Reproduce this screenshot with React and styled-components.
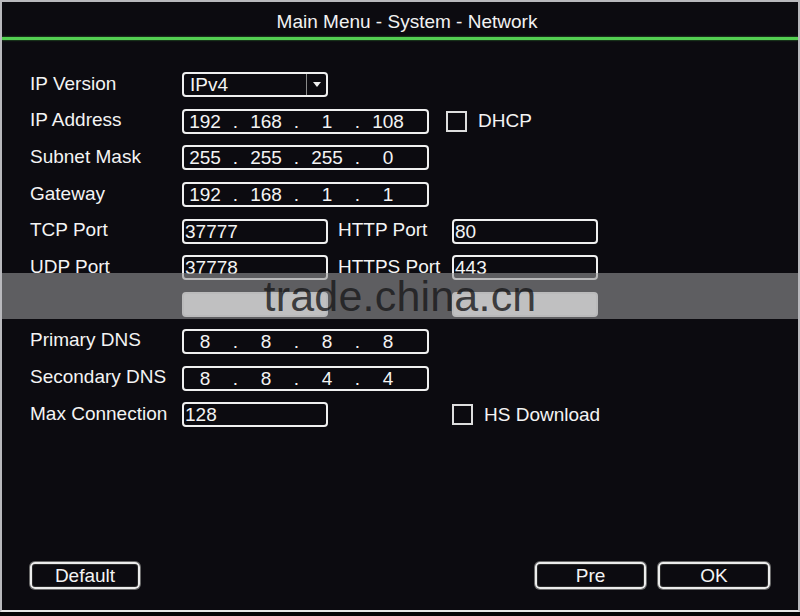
import React from 'react';
import styled, {createGlobalStyle} from 'styled-components';

const GlobalStyle = createGlobalStyle`
    html, body {
        margin: 0;
        padding: 0;
        background: #050507;
    }
    body {
        font-family: "Liberation Sans", Arial, sans-serif;
    }
`

const Screen = styled.div`
    position: relative;
    width: 800px;
    height: 612px;
    box-sizing: border-box;
    background: #0c0b10;
    border: 2px solid #b9b9bd;
    border-bottom-color: #e6e6e6;
    display: flex;
    flex-direction: column;
    color: #f4f4f4;
    font-size: 19px;
    overflow: hidden;
`

const TitleBar = styled.div`
    height: 35px;
    box-sizing: border-box;
    display: flex;
    align-items: center;
    justify-content: center;
    padding: 5px 0 0 14px;
    font-size: 19px;
    color: #f2f2f2;
`

const GreenLine = styled.div`
    height: 3px;
    background: #54cf52;
    box-shadow: 0 0 2px #3e9e3c;
`

const Form = styled.div`
    display: grid;
    grid-auto-rows: 25px;
    row-gap: 11.7px;
    padding: 32px 0 0 28px;
`

const Row = styled.div`
    display: flex;
    align-items: center;
`

const Label = styled.div`
    box-sizing: border-box;
    width: ${p => p.width || 152}px;
    padding-left: ${p => p.indent || 0}px;
    flex-shrink: 0;
    white-space: nowrap;
    margin-top: -2px;
`

const Box = styled.div`
    box-sizing: border-box;
    width: ${p => p.width}px;
    height: 25px;
    border: 2px solid #f0f0f0;
    border-radius: 4px;
    background: ${p => p.filled ? '#ffffff' : 'transparent'};
    display: flex;
    align-items: center;
    padding-left: 1px;
    flex-shrink: 0;
    line-height: 1;
`

const IpBox = styled(Box)`
    display: grid;
    grid-template-columns: 42px 19px 42px 19px 42px 19px 42px;
    padding-left: 0;
    align-items: center;
`

const IpCell = styled.span`
    text-align: center;
`

const SelectBox = styled(Box)`
    padding-left: 6px;
    justify-content: space-between;
    padding-right: 0;
`

const DropButton = styled.div`
    width: 19px;
    height: 100%;
    border-left: 1px solid #8a8a8a;
    display: flex;
    align-items: center;
    justify-content: center;
`

const Arrow = styled.div`
    width: 0;
    height: 0;
    border-left: 4px solid transparent;
    border-right: 4px solid transparent;
    border-top: 5px solid #f0f0f0;
`

const Check = styled.div`
    box-sizing: border-box;
    width: 21px;
    height: 21px;
    border: 2px solid #dedede;
    margin-left: ${p => p.offset}px;
    margin-right: 11px;
    flex-shrink: 0;
`

const Footer = styled.div`
    margin-top: auto;
    display: flex;
    align-items: center;
    padding: 0 28px 21px 28px;
    gap: 12px;
`

const Spacer = styled.div`
    flex: 1;
`

const Button = styled.div`
    box-sizing: border-box;
    width: ${p => p.width}px;
    height: 27px;
    border: 2px solid #ececec;
    border-radius: 5px;
    box-shadow: inset 0 0 0 1px #2a2a2a, 0 0 0 1px #6a6a6a;
    display: flex;
    align-items: center;
    justify-content: center;
    font-size: 19px;
    color: #f4f4f4;
`

const Watermark = styled.div`
    position: absolute;
    left: 0;
    right: 0;
    top: 271px;
    height: 46px;
    background: rgba(150, 150, 152, 0.6);
    display: flex;
    align-items: center;
    justify-content: center;
    font-size: 43px;
    color: rgba(24, 24, 26, 0.8);
    letter-spacing: 0.2px;
`

const IpField = ({parts}) => (
    <IpBox width={247}>
        {parts.map((p, i) => (
            <React.Fragment key={i}>
                {i > 0 && <IpCell>.</IpCell>}
                <IpCell>{p}</IpCell>
            </React.Fragment>
        ))}
    </IpBox>
)

export default function App() {
    return (
        <>
            <GlobalStyle/>
            <Screen>
                <TitleBar>Main Menu - System - Network</TitleBar>
                <GreenLine/>
                <Form>
                    <Row>
                        <Label>IP Version</Label>
                        <SelectBox width={146}>
                            <span>IPv4</span>
                            <DropButton><Arrow/></DropButton>
                        </SelectBox>
                    </Row>
                    <Row>
                        <Label>IP Address</Label>
                        <IpField parts={['192', '168', '1', '108']}/>
                        <Check offset={17}/>
                        <span>DHCP</span>
                    </Row>
                    <Row>
                        <Label>Subnet Mask</Label>
                        <IpField parts={['255', '255', '255', '0']}/>
                    </Row>
                    <Row>
                        <Label>Gateway</Label>
                        <IpField parts={['192', '168', '1', '1']}/>
                    </Row>
                    <Row>
                        <Label>TCP Port</Label>
                        <Box width={146}>37777</Box>
                        <Label width={124} indent={10}>HTTP Port</Label>
                        <Box width={146}>80</Box>
                    </Row>
                    <Row>
                        <Label>UDP Port</Label>
                        <Box width={146}>37778</Box>
                        <Label width={124} indent={10}>HTTPS Port</Label>
                        <Box width={146}>443</Box>
                    </Row>
                    <Row>
                        <Label></Label>
                        <Box width={146} filled/>
                        <Label width={124}></Label>
                        <Box width={146} filled/>
                    </Row>
                    <Row>
                        <Label>Primary DNS</Label>
                        <IpField parts={['8', '8', '8', '8']}/>
                    </Row>
                    <Row>
                        <Label>Secondary DNS</Label>
                        <IpField parts={['8', '8', '4', '4']}/>
                    </Row>
                    <Row>
                        <Label>Max Connection</Label>
                        <Box width={146}>128</Box>
                        <Check offset={124}/>
                        <span>HS Download</span>
                    </Row>
                </Form>
                <Footer>
                    <Button width={110}>Default</Button>
                    <Spacer/>
                    <Button width={111}>Pre</Button>
                    <Button width={112}>OK</Button>
                </Footer>
                <Watermark>trade.china.cn</Watermark>
            </Screen>
        </>
    );
}
